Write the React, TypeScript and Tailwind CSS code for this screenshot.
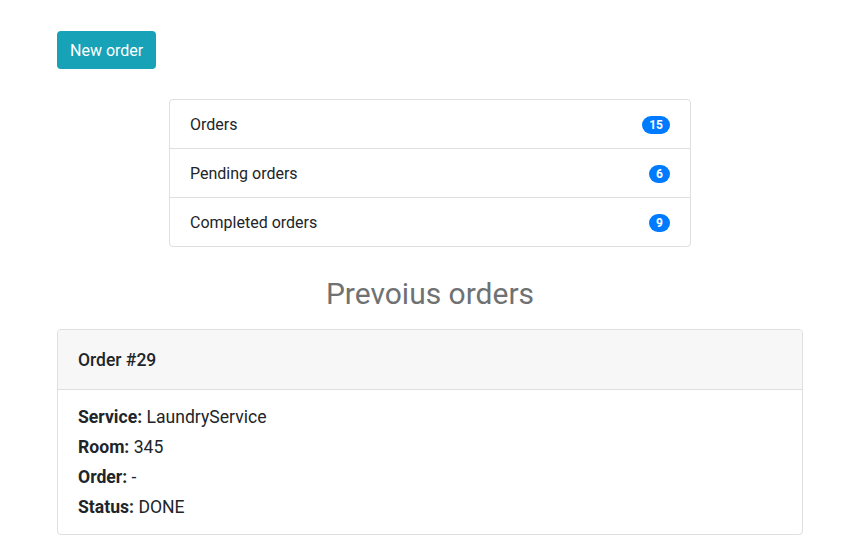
export default function App() {
  const items = [
    { label: "Orders", count: 15 },
    { label: "Pending orders", count: 6 },
    { label: "Completed orders", count: 9 },
  ];
  return (
    <div
      className="w-[855px] min-h-[548px] bg-white text-[#212529] text-[16px] leading-6"
      style={{ fontFamily: "Roboto, 'Liberation Sans', sans-serif" }}
    >
      <div className="ml-[57px] w-[746px] pt-[31px]">
        <button className="h-[38px] px-[13px] pt-px rounded-[4px] bg-[#17a2b8] text-white text-[16px] leading-6">
          New order
        </button>
        <div className="mt-[30px] mx-auto w-[522px] border border-[#dfdfdf] rounded-[4px]">
          {items.map((it, i) => (
            <div
              key={it.label}
              className={`flex items-center justify-between pt-[13px] pb-[11px] px-5 ${i > 0 ? "border-t border-[#dfdfdf]" : ""}`}
            >
              <span>{it.label}</span>
              <span className="bg-[#007bff] text-white text-[12px] font-bold leading-none rounded-full px-[7px] py-[3px] min-w-[21px] text-center">
                {it.count}
              </span>
            </div>
          ))}
        </div>
        <h2 className="mt-[29px] text-center text-[30px] leading-[36px] text-[#6f7173] font-normal">
          Prevoius orders
        </h2>
        <div className="mt-[17px] border border-[#dfdfdf] rounded-[4px] overflow-hidden">
          <div className="h-[60px] flex items-center px-5 bg-[#f7f7f7] border-b border-[#dfdfdf]">
            <span className="text-[17.5px] font-medium">Order #29</span>
          </div>
          <div className="px-5 pt-[12px] pb-[12px] flex flex-col text-[17.6px] leading-[30px]">
            <div><span className="font-bold">Service:</span> LaundryService</div>
            <div><span className="font-bold">Room:</span> 345</div>
            <div><span className="font-bold">Order:</span> -</div>
            <div><span className="font-bold">Status:</span> DONE</div>
          </div>
        </div>
      </div>
    </div>
  );
}
